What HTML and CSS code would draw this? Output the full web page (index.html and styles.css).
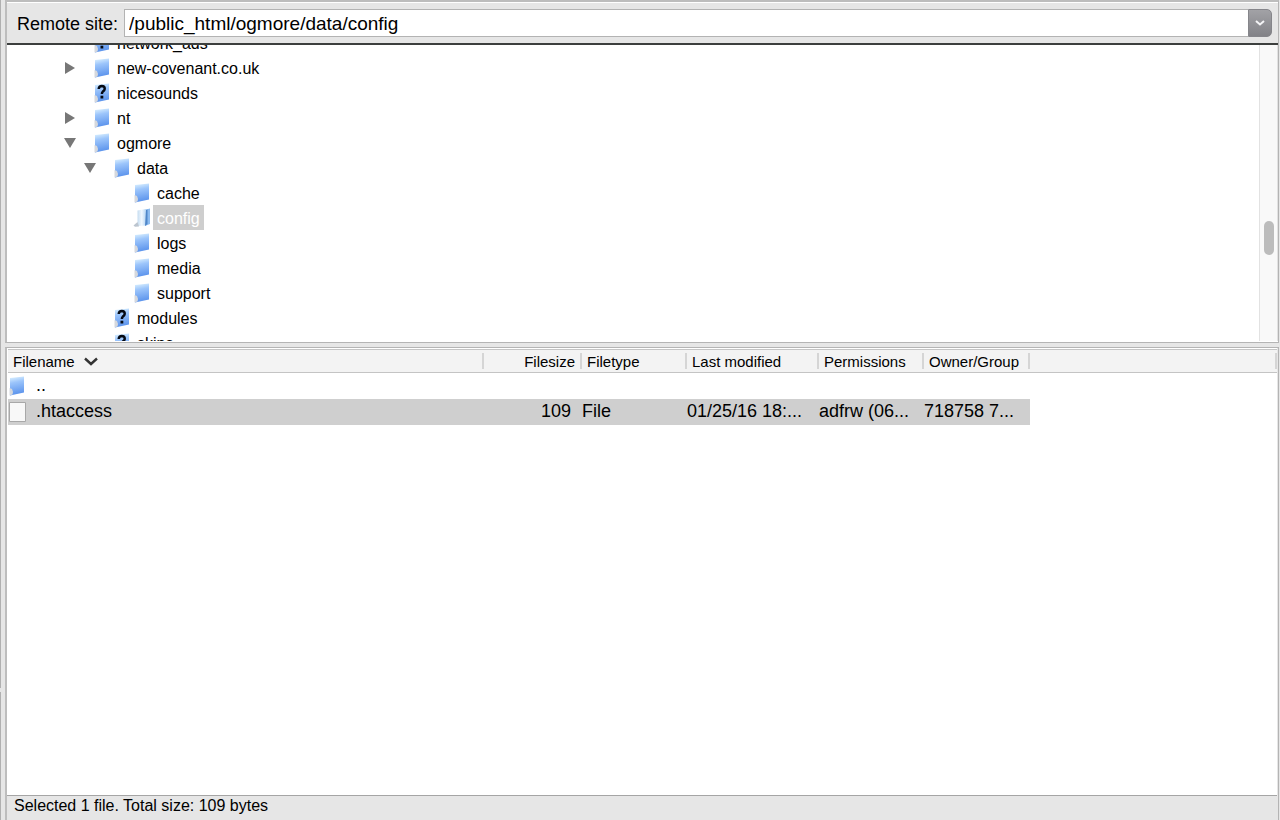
FILE: index.html
```html
<!DOCTYPE html>
<html lang="en">
<head>
<meta charset="utf-8">
<title>Remote site</title>
<link rel="stylesheet" href="styles.css">
</head>
<body>
<svg class="defs" aria-hidden="true">
  <defs>
    <linearGradient id="blue" x1="0" y1="0" x2="0.15" y2="1">
      <stop offset="0" stop-color="#e2f5ff"/>
      <stop offset="0.35" stop-color="#9cc5fb"/>
      <stop offset="1" stop-color="#5b93ec"/>
    </linearGradient>
    <linearGradient id="pale" x1="0" y1="0" x2="1" y2="0">
      <stop offset="0" stop-color="#c5dcf0"/>
      <stop offset="0.5" stop-color="#f0f8ff"/>
      <stop offset="1" stop-color="#b5d5f3"/>
    </linearGradient>
    <symbol id="folder" viewBox="0 0 18 20">
      <path d="M2 2 L16 0.5 V16.5 L2 19.5Z" fill="url(#blue)"/>
      <path d="M1.5 12 L4 13 L5 16 L4.5 18.5 L1.5 19.5Z" fill="#d5d8dd"/>
    </symbol>
    <symbol id="unknown" viewBox="0 0 18 20">
      <use href="#folder"/>
      <path d="M5.7 6 Q6 3 8.8 3 Q11.8 3.1 11.7 5.8 Q11.6 7.4 9.8 8.6 Q8.9 9.4 8.9 11" fill="none" stroke="#050a14" stroke-width="2.5"/>
      <path d="M7.5 12.7h2.8v2.8h-2.8z" fill="#050a14"/>
    </symbol>
    <symbol id="open" viewBox="0 0 18 20">
      <path d="M11 2 L17 0.5 V16 L12 18Z" fill="#8dbcf0"/>
      <path d="M4.5 2.5 L13 1 V17.5 L4.5 18Z" fill="url(#pale)"/>
      <path d="M13 2 L14.5 1.5 V16 L12 18Z" fill="#4f86c8"/>
      <path d="M0.5 17.5 L4.5 14 L6 18.5 L2 18.8Z" fill="#bcc5cf"/>
    </symbol>
  </defs>
</svg>
<div class="window">
  <div class="splitter"><i class="split-top"></i><i class="split-bottom"></i></div>
  <main class="remote">
    <section class="site">
      <form class="toolbar">
        <label for="path">Remote site:</label>
        <div class="combo">
          <input id="path" type="text" value="/public_html/ogmore/data/config">
          <button type="button" aria-label="Show recent paths"><svg viewBox="0 0 12 8" width="12" height="8"><path d="M2 2 L6 5.5 L10 2" fill="none" stroke="#f4f4f6" stroke-width="2"/></svg></button>
        </div>
      </form>
      <div class="tree-pane">
        <ul class="tree">
          <li><div class="node"><span class="arrow"></span><svg class="icon"><use href="#unknown"/></svg><span class="name">network_ads</span></div></li>
          <li><div class="node"><button class="arrow closed" aria-label="Expand new-covenant.co.uk"></button><svg class="icon"><use href="#folder"/></svg><span class="name">new-covenant.co.uk</span></div></li>
          <li><div class="node"><span class="arrow"></span><svg class="icon"><use href="#unknown"/></svg><span class="name">nicesounds</span></div></li>
          <li><div class="node"><button class="arrow closed" aria-label="Expand nt"></button><svg class="icon"><use href="#folder"/></svg><span class="name">nt</span></div></li>
          <li><div class="node"><button class="arrow opened" aria-label="Collapse ogmore"></button><svg class="icon"><use href="#folder"/></svg><span class="name">ogmore</span></div>
            <ul>
              <li><div class="node"><button class="arrow opened" aria-label="Collapse data"></button><svg class="icon"><use href="#folder"/></svg><span class="name">data</span></div>
                <ul>
                  <li><div class="node"><span class="arrow"></span><svg class="icon"><use href="#folder"/></svg><span class="name">cache</span></div></li>
                  <li><div class="node"><span class="arrow"></span><svg class="icon"><use href="#open"/></svg><span class="name selected">config</span></div></li>
                  <li><div class="node"><span class="arrow"></span><svg class="icon"><use href="#folder"/></svg><span class="name">logs</span></div></li>
                  <li><div class="node"><span class="arrow"></span><svg class="icon"><use href="#folder"/></svg><span class="name">media</span></div></li>
                  <li><div class="node"><span class="arrow"></span><svg class="icon"><use href="#folder"/></svg><span class="name">support</span></div></li>
                </ul>
              </li>
              <li><div class="node"><span class="arrow"></span><svg class="icon"><use href="#unknown"/></svg><span class="name">modules</span></div></li>
              <li><div class="node"><span class="arrow"></span><svg class="icon"><use href="#unknown"/></svg><span class="name">skins</span></div></li>
            </ul>
          </li>
        </ul>
        <div class="scrollbar"><div class="thumb"></div></div>
      </div>
    </section>
    <section class="files">
      <div class="list">
        <table>
          <colgroup><col class="c-name"><col class="c-size"><col class="c-type"><col class="c-date"><col class="c-perm"><col class="c-owner"><col></colgroup>
          <thead>
            <tr><th><span class="head">Filename <svg viewBox="0 0 14 9" width="14" height="9"><path d="M1 1.5 L7 7 L13 1.5" fill="none" stroke="#333" stroke-width="2.4"/></svg></span></th><th class="num"><span class="head">Filesize</span></th><th><span class="head">Filetype</span></th><th><span class="head">Last modified</span></th><th><span class="head">Permissions</span></th><th><span class="head">Owner/Group</span></th><td><span class="head"></span></td></tr>
          </thead>
          <tbody>
            <tr><td><span class="file"><svg class="icon"><use href="#folder"/></svg>..</span></td><td></td><td></td><td></td><td></td><td></td><td></td></tr>
            <tr class="picked"><td><span class="file"><svg class="icon" viewBox="0 0 18 20"><path d="M1.5 0.5h16v19h-16z" fill="#f8f8f8" stroke="#a8a8a8"/></svg>.htaccess</span></td><td class="num">109</td><td>File</td><td>01/25/16 18:...</td><td>adfrw (06...</td><td>718758 7...</td><td></td></tr>
          </tbody>
        </table>
      </div>
      <footer class="status">Selected 1 file. Total size: 109 bytes</footer>
    </section>
  </main>
</div>
</body>
</html>
```
FILE: styles.css
```css
* { box-sizing: border-box; }
body {
  margin: 0;
  background: #e6e6e6;
  color: #000;
  font-family: "Liberation Sans", Arial, sans-serif;
  font-size: 16px;
}
button { padding: 0; border: 0; background: none; }
ul { list-style: none; margin: 0; padding: 0; }
.defs { position: absolute; width: 0; height: 0; }
.window { display: flex; height: 100vh; min-height: 480px; overflow: hidden; }
.splitter { display: flex; flex-direction: column; gap: 4px; width: 5px; }
.splitter i { width: 1px; background: #b0b0b0; }
.split-top { flex: 688; }
.split-bottom { flex: 128; }
.remote {
  flex: 1;
  min-width: 0;
  display: flex;
  flex-direction: column;
  gap: 4px;
  padding-right: 1px;
}
.site, .files {
  display: flex;
  flex-direction: column;
  border: 1px solid #b4b4b4;
  border-left: 2px solid #bdbdbd;
}
.site { height: 343px; border-top: 2px solid #bdbdbd; }
.files { flex: 1; min-height: 0; border-bottom: 0; padding-right: 1px; }
.toolbar {
  display: flex;
  align-items: center;
  gap: 6px;
  height: 43px;
  padding: 0 6px 0 10px;
  border-top: 1px solid #fff;
  border-bottom: 2px solid #3c3f3e;
  font-size: 18px;
}
.toolbar label { padding-top: 2px; }
.combo { flex: 1; display: flex; height: 28px; font-size: 19px; }
.combo input {
  flex: 1;
  min-width: 0;
  padding: 2px 4px 0;
  border: 1px solid #b3b3b3;
  border-right: 0;
  background: #fff;
  color: #000;
  font: inherit;
  outline: 0;
}
.combo button {
  display: flex;
  align-items: center;
  justify-content: center;
  width: 24px;
  border: 1px solid #85858a;
  border-radius: 0 5px 5px 0;
  background: linear-gradient(#a2a2a6, #828287);
}
.tree-pane {
  flex: 1;
  min-height: 0;
  display: flex;
  overflow: hidden;
  border-bottom: 1px solid #fff;
  background: #fff;
}
.tree { flex: 1; margin-top: -15px; padding-left: 56px; }
.tree ul { padding-left: 20px; }
.node { display: flex; align-items: center; height: 25px; }
.arrow { display: flex; align-items: center; justify-content: center; width: 14px; height: 14px; margin-right: 16px; }
.arrow.closed::before {
  content: "";
  border-left: 10px solid #777;
  border-top: 6px solid transparent;
  border-bottom: 6px solid transparent;
}
.arrow.opened::before {
  content: "";
  border-top: 10px solid #777;
  border-left: 6px solid transparent;
  border-right: 6px solid transparent;
}
.icon { flex: none; width: 18px; height: 20px; }
.name { margin-left: 2px; padding: 0 4px; height: 25px; line-height: 27px; }
.selected { background: #cecece; color: #fff; }
.scrollbar { width: 19px; border: solid #e2e2e2; border-width: 0 1px; background: #f9f9f9; }
.thumb { width: 10px; height: 34px; margin: 176px 0 0 4px; border-radius: 5px; background: #bcbcbc; }
.list { flex: 1; min-height: 0; padding: 1px 0 0 1px; background: #fff; overflow: hidden; }
table { width: 100%; table-layout: fixed; border-collapse: collapse; }
.c-name { width: 476px; }
.c-size { width: 98px; }
.c-type { width: 105px; }
.c-date { width: 132px; }
.c-perm { width: 105px; }
.c-owner { width: 106px; }
th, td { padding: 0; text-align: left; font-weight: normal; white-space: nowrap; overflow: hidden; }
thead tr { height: 23px; background: #f3f3f3; border: solid #c4c4c4; border-width: 1px 0; font-size: 15px; }
.head {
  display: flex;
  align-items: center;
  gap: 9px;
  height: 16px;
  padding: 0 5px;
  border-right: 2px solid #d5d5d5;
}
.num, .num .head { text-align: right; justify-content: flex-end; }
tbody tr { height: 26px; font-size: 18px; }
tbody .num { padding-right: 11px; }
.file { display: flex; align-items: center; gap: 10px; }
.picked td { background: #cfcfcf; }
.picked td:last-child { background: none; }
.status { height: 25px; padding-left: 7px; border-top: 1px solid #a5a5a5; line-height: 20px; }
```
